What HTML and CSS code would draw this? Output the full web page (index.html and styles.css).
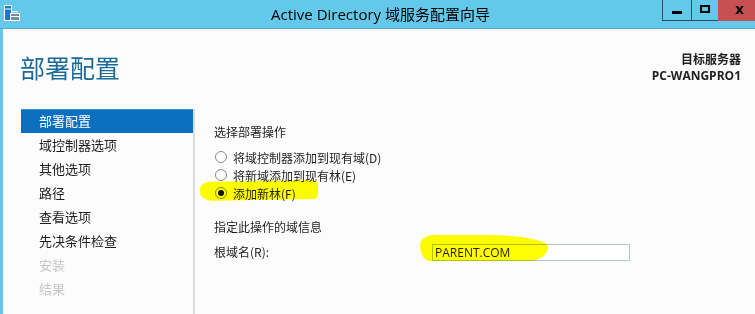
FILE: index.html
```html
<!DOCTYPE html>
<html lang="zh-CN">
<head>
<meta charset="utf-8">
<title>Active Directory 域服务配置向导</title>
<link rel="stylesheet" href="styles.css">
</head>
<body>
<div class="window">
  <div class="titlebar">
    <div class="tb-left">
      <svg class="app-icon" width="18" height="18" viewBox="0 0 18 18">
        <rect x="1.5" y="1.5" width="7" height="15" fill="#1976c8" stroke="#fff" stroke-width="1"/>
        <line x1="2" y1="5" x2="8" y2="5" stroke="#fff" stroke-width="1"/>
        <rect x="7.5" y="9.5" width="9" height="7" fill="#7c8a96" stroke="#fff" stroke-width="1"/>
        <rect x="10" y="7.5" width="4" height="2" fill="none" stroke="#fff" stroke-width="1"/>
        <line x1="8" y1="12.5" x2="16" y2="12.5" stroke="#fff" stroke-width="1"/>
      </svg>
    </div>
    <div class="tb-title">Active Directory 域服务配置向导</div>
    <div class="tb-right">
      <div class="tb-btn btn-min"><span class="glyph-min"></span></div>
      <div class="tb-btn btn-max"><span class="glyph-max"></span></div>
      <div class="tb-btn btn-close"><span class="glyph-close">x</span></div>
    </div>
  </div>
  <div class="header">
    <h1 class="page-title">部署配置</h1>
    <div class="target">
      <div>目标服务器</div>
      <div>PC-WANGPRO1</div>
    </div>
  </div>
  <div class="main">
    <ul class="nav">
      <li class="nav-item active">部署配置</li>
      <li class="nav-item">域控制器选项</li>
      <li class="nav-item">其他选项</li>
      <li class="nav-item">路径</li>
      <li class="nav-item">查看选项</li>
      <li class="nav-item">先决条件检查</li>
      <li class="nav-item disabled">安装</li>
      <li class="nav-item disabled">结果</li>
    </ul>
    <div class="content">
      <div class="section-label">选择部署操作</div>
      <div class="radios">
        <label class="radio"><span class="radio-dot"></span>将域控制器添加到现有域(D)</label>
        <label class="radio"><span class="radio-dot"></span>将新域添加到现有林(E)</label>
        <label class="radio checked"><span class="radio-dot"></span>添加新林(F)</label>
      </div>
      <div class="section-label second">指定此操作的域信息</div>
      <div class="field">
        <span class="field-label">根域名(R):</span>
        <span class="input">PARENT.COM</span>
      </div>
      <span class="mark mark-1"></span>
      <span class="mark mark-2"></span>
    </div>
  </div>
</div>
</body>
</html>
```

FILE: styles.css
```css
* { box-sizing: border-box; }
html, body { margin: 0; padding: 0; }
body {
  width: 755px;
  height: 314px;
  overflow: hidden;
  background: #fcfcfc;
  font-family: "Noto Sans CJK SC", "Noto Sans", sans-serif;
  color: #1e1e1e;
}
.window {
  width: 755px;
  height: 314px;
  border-left: 3px solid #63c8ea;
  background: #fcfcfc;
}
.titlebar {
  height: 29px;
  margin-left: -3px;
  background: #63c8ea;
  border-bottom: 1px solid #59a9c4;
  display: grid;
  grid-template-columns: 1fr auto 1fr;
  align-items: start;
}
.tb-left { padding: 4px 0 0 3px; }
.app-icon { display: block; }
.tb-title {
  font-family: "Open Sans", "Noto Sans CJK SC", sans-serif;
  font-size: 15px;
  line-height: 28px;
  color: #000;
  padding-left: 6px;
}
.tb-right {
  display: flex;
  justify-content: flex-end;
}
.tb-btn {
  height: 21px;
  display: flex;
  align-items: center;
  justify-content: center;
}
.btn-min {
  width: 30px;
  border: 1px solid #2b4f5c;
  border-top: none;
}
.btn-max {
  width: 26px;
  border-bottom: 1px solid #2b4f5c;
}
.btn-close {
  width: 37px;
  background: #c75050;
}
.glyph-min {
  width: 10px;
  height: 3px;
  background: #000;
  margin-top: 4px;
}
.glyph-max {
  width: 10px;
  height: 8px;
  border: 2px solid #000;
  margin-top: -2px;
}
.glyph-close {
  font-family: "DejaVu Sans", sans-serif;
  font-weight: bold;
  font-size: 14px;
  line-height: 1;
  color: #000;
  margin-top: -3px;
  margin-left: 6px;
}
.header {
  height: 80px;
  padding: 22px 14px 0 17px;
  display: flex;
  justify-content: space-between;
  align-items: flex-start;
}
.page-title {
  margin: 0;
  font-size: 25px;
  font-weight: normal;
  line-height: 32px;
  color: #1b6a96;
}
.target {
  text-align: right;
  font-family: "Open Sans", "Noto Sans CJK SC", sans-serif;
  font-weight: bold;
  font-size: 12px;
  line-height: 16px;
  color: #1e1e1e;
  padding-top: 1px;
}
.main {
  display: flex;
  height: 205px;
}
.nav {
  list-style: none;
  margin: 0 0 0 18px;
  padding: 0;
  width: 174px;
  border-right: 2px solid #dcdcdc;
}
.nav-item {
  height: 24px;
  line-height: 24px;
  padding-left: 18px;
  font-size: 13px;
  color: #1e1e1e;
}
.nav-item.active {
  background: #0b6fc0;
  color: #fff;
  border-top: 1px solid #3d8fd4;
  line-height: 22px;
}
.nav-item.disabled { color: #c6c6c6; }
.content {
  flex: 1;
  padding: 14px 0 0 19px;
  font-size: 12px;
  position: relative;
}
.section-label {
  line-height: 18px;
  color: #1e1e1e;
}
.section-label.second { margin-top: 16px; }
.radios {
  margin-top: 7px;
  display: flex;
  flex-direction: column;
}
.radio {
  height: 18px;
  display: flex;
  align-items: center;
  gap: 6px;
  color: #1e1e1e;
}
.radio-dot {
  width: 12px;
  height: 12px;
  margin-left: 1px;
  border-radius: 50%;
  border: 1px solid #8b8b8b;
  background: #fff;
  display: flex;
  align-items: center;
  justify-content: center;
}
.radio.checked .radio-dot::after {
  content: "";
  width: 6px;
  height: 6px;
  border-radius: 50%;
  background: #111;
}
.field {
  margin-top: 7px;
  height: 18px;
  display: flex;
  align-items: center;
}
.field-label {
  width: 218px;
  line-height: 18px;
}
.input {
  width: 198px;
  height: 17px;
  border: 1px solid #a9c8e4;
  background: #fff;
  font-family: "Open Sans", "Noto Sans CJK SC", sans-serif;
  font-size: 12px;
  line-height: 15px;
  padding-left: 2px;
  color: #1e1e1e;
}
.mark {
  position: absolute;
  background: #ffff00;
  mix-blend-mode: multiply;
}
.mark-1 {
  left: 5px;
  top: 72px;
  width: 118px;
  height: 19px;
  border-radius: 9px 6px 4px 12px / 8px 4px 6px 9px;
  transform: rotate(-1deg);
}
.mark-2 {
  left: 225px;
  top: 126px;
  width: 128px;
  height: 26px;
  border-radius: 14px 60px 20px 10px / 10px 12px 14px 16px;
}
```
